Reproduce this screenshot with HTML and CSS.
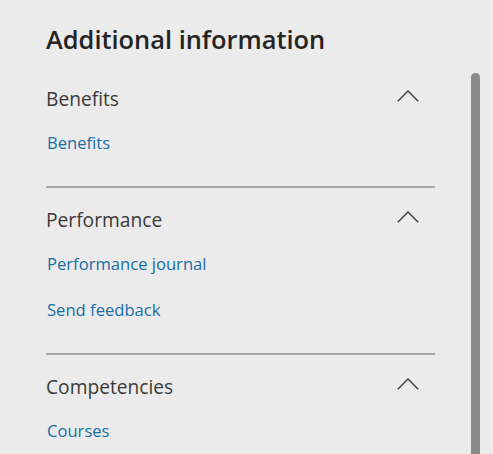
FILE: index.html
```html
<!DOCTYPE html>
<html lang="en">
<head>
<meta charset="utf-8">
<title>Additional information</title>
<link rel="stylesheet" href="styles.css">
</head>
<body>
<div class="page">
  <main class="panel">
    <h1 class="title">Additional information</h1>
    <section class="group first">
      <div class="group-head">
        <h2 class="group-title">Benefits</h2>
        <svg class="chevron" width="22" height="12" viewBox="0 0 22 12" aria-hidden="true"><path d="M0.8 11.2 L11 1 L21.2 11.2" fill="none" stroke="#3a3a3a" stroke-width="1.4"/></svg>
      </div>
      <ul class="links">
        <li><a href="#">Benefits</a></li>
      </ul>
    </section>
    <section class="group">
      <div class="group-head">
        <h2 class="group-title">Performance</h2>
        <svg class="chevron" width="22" height="12" viewBox="0 0 22 12" aria-hidden="true"><path d="M0.8 11.2 L11 1 L21.2 11.2" fill="none" stroke="#3a3a3a" stroke-width="1.4"/></svg>
      </div>
      <ul class="links">
        <li><a href="#">Performance journal</a></li>
        <li><a href="#">Send feedback</a></li>
      </ul>
    </section>
    <section class="group last">
      <div class="group-head">
        <h2 class="group-title">Competencies</h2>
        <svg class="chevron" width="22" height="12" viewBox="0 0 22 12" aria-hidden="true"><path d="M0.8 11.2 L11 1 L21.2 11.2" fill="none" stroke="#3a3a3a" stroke-width="1.4"/></svg>
      </div>
      <ul class="links">
        <li><a href="#">Courses</a></li>
      </ul>
    </section>
  </main>
  <div class="scrollbar"><div class="thumb"></div></div>
</div>
</body>
</html>
```
FILE: styles.css
```css
html, body {
  margin: 0;
  padding: 0;
  height: 100%;
  overflow: hidden;
}
body {
  background: #ebebeb;
  font-family: "Open Sans", "Noto Sans", sans-serif;
}
.page {
  display: flex;
  height: 454px;
}
.panel {
  width: 389px;
  padding-left: 46px;
}
.title {
  margin: 0;
  padding-top: 23px;
  font-size: 25.4px;
  line-height: 32px;
  font-weight: 600;
  color: #252423;
}
.group {
  padding-top: 18px;
  padding-bottom: 31px;
  border-bottom: 2px solid #a6a6a6;
}
.group.first {
  padding-top: 30px;
}
.group.last {
  border-bottom: none;
}
.group-head {
  display: flex;
  justify-content: space-between;
  align-items: flex-start;
}
.group-title {
  margin: 0;
  font-size: 19.2px;
  line-height: 28px;
  font-weight: 400;
  color: #3b3a39;
}
.chevron {
  margin-top: 5px;
  margin-right: 16px;
}
.links {
  list-style: none;
  margin: 18px 0 0;
  padding: 0 0 0 1px;
  display: flex;
  flex-direction: column;
  gap: 22px;
}
.links li {
  line-height: 24px;
}
.links a {
  font-size: 16.6px;
  color: #176ea4;
  text-decoration: none;
}
.scrollbar {
  margin-left: 36px;
  padding-top: 73px;
  width: 9px;
}
.thumb {
  height: 400px;
  background: #8a8a8a;
  border-radius: 4.5px 4.5px 0 0;
}
```
